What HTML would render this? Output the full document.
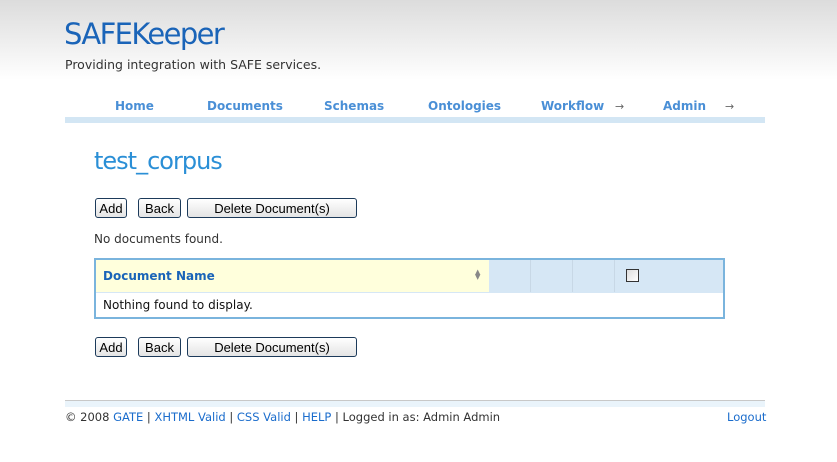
<!DOCTYPE html>
<html><head><style>
body{margin:0;width:837px;height:462px;position:relative;font-family:"DejaVu Sans","Liberation Sans",sans-serif;font-size:12px;color:#333;background:linear-gradient(#dcdcdc 0,#fff 80px,#fff);overflow:hidden}
.a{position:absolute;white-space:nowrap}
.nav{font-weight:bold;color:#4a8fd6;font-size:12px;top:99px}
.arr{color:#666;font-size:11px;top:100px}
.btn{position:absolute;height:20px;border:1px solid #1c3a5a;border-radius:3px;background:linear-gradient(#fff,#e4e4e4);font-family:"Liberation Sans",sans-serif;font-size:13px;color:#000;text-align:center;line-height:20px;box-sizing:border-box}
a{color:#1a6ccc;text-decoration:none}
</style></head><body>
<div class="a" style="left:64px;top:17px;font-size:29px;color:#1a64b8;letter-spacing:-1.6px">SAFEKeeper</div>
<div class="a" style="left:65px;top:57px;font-size:12.5px;color:#333">Providing integration with SAFE services.</div>
<div class="a nav" style="left:115px">Home</div>
<div class="a nav" style="left:207px">Documents</div>
<div class="a nav" style="left:324px">Schemas</div>
<div class="a nav" style="left:428px">Ontologies</div>
<div class="a nav" style="left:541px">Workflow</div>
<div class="a arr" style="left:615px">→</div>
<div class="a nav" style="left:663px">Admin</div>
<div class="a arr" style="left:725px">→</div>
<div class="a" style="left:65px;top:117px;width:700px;height:6px;background:#d3e6f4"></div>
<div class="a" style="left:94px;top:147px;font-size:24px;color:#2b8fd6;letter-spacing:-1px">test_corpus</div>
<div class="btn" style="left:95px;top:198px;width:32px">Add</div>
<div class="btn" style="left:138px;top:198px;width:43px">Back</div>
<div class="btn" style="left:187px;top:198px;width:170px">Delete Document(s)</div>
<div class="a" style="left:94px;top:232px">No documents found.</div>
<div class="a" style="left:94px;top:258px;width:627px;height:57px;border:2px solid #7ab4dd;background:#fff">
 <div class="a" style="left:0;top:0;width:393px;height:32px;background:#ffffdc"></div>
 <div class="a" style="left:393px;top:0;width:234px;height:32px;background:#d6e7f5"></div>
 <div class="a" style="left:434px;top:0;width:1px;height:32px;background:#c8d8e6"></div>
 <div class="a" style="left:476px;top:0;width:1px;height:32px;background:#c8d8e6"></div>
 <div class="a" style="left:518px;top:0;width:1px;height:32px;background:#c8d8e6"></div>
 <div class="a" style="left:0;top:32px;width:627px;height:1px;background:#d6e7f5"></div>
 <div class="a" style="left:7px;top:9px;font-weight:bold;color:#1a64b8">Document Name</div>
 <div class="a" style="left:379px;top:10px;font-size:7px;color:#888;line-height:5px">▲<br>▼</div>
 <div class="a" style="left:530px;top:9px;width:11px;height:11px;border:1px solid #333;background:linear-gradient(135deg,#ddd,#fff)"></div>
 <div class="a" style="left:7px;top:38px;color:#111">Nothing found to display.</div>
</div>
<div class="btn" style="left:95px;top:337px;width:32px">Add</div>
<div class="btn" style="left:138px;top:337px;width:43px">Back</div>
<div class="btn" style="left:187px;top:337px;width:170px">Delete Document(s)</div>
<div class="a" style="left:65px;top:400px;width:700px;height:1px;background:#c8c8c8"></div>
<div class="a" style="left:65px;top:401px;width:700px;height:6px;background:#eaf4fb"></div>
<div class="a" style="left:65px;top:410px;font-size:11.5px">© 2008 <a>GATE</a> | <a>XHTML Valid</a> | <a>CSS Valid</a> | <a>HELP</a> | Logged in as: Admin Admin</div>
<div class="a" style="left:727px;top:410px;font-size:11.5px"><a>Logout</a></div>
</body></html>
